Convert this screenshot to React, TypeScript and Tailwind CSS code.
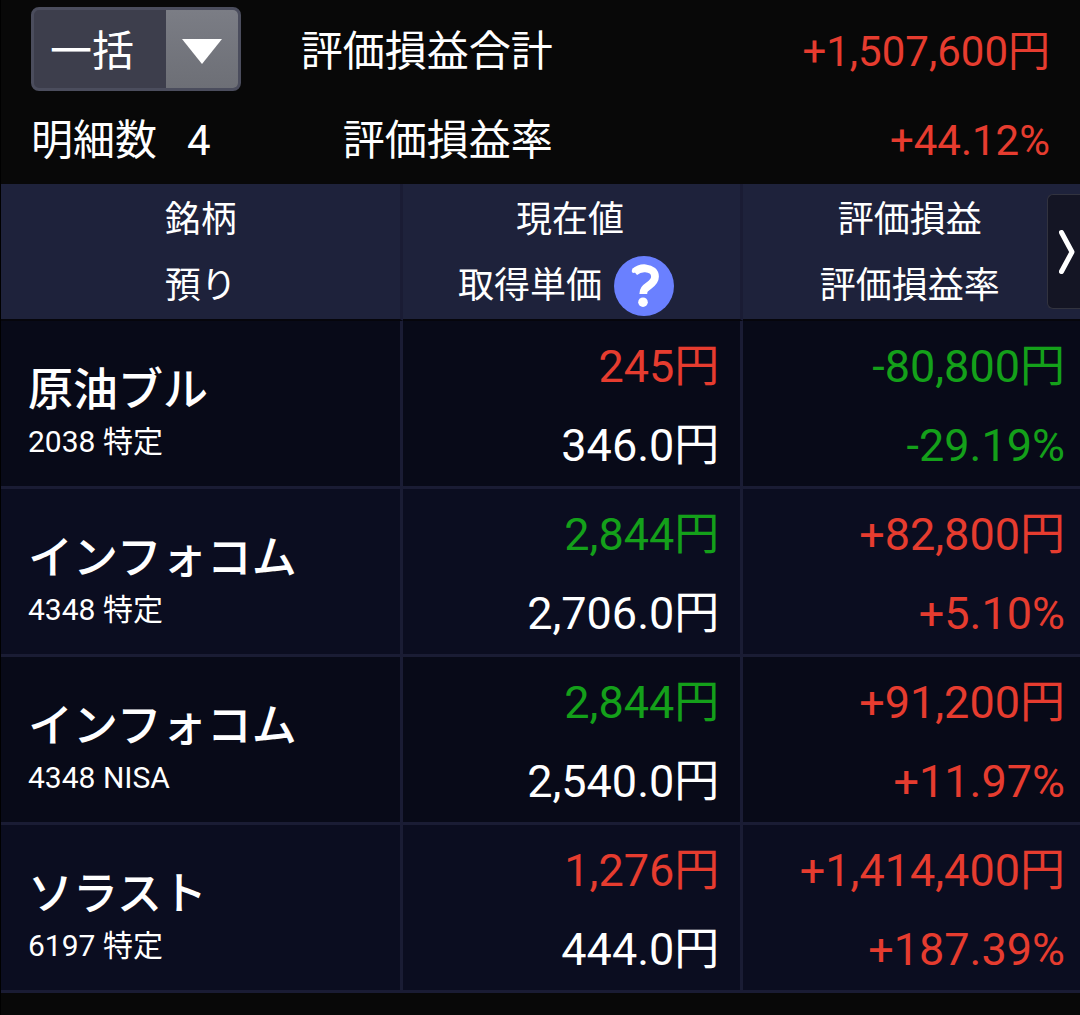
import { useState } from "react";
import clsx from "clsx";

type Holding = {
  name: string;
  code: string;
  account: string;
  price: string;
  priceUp: boolean;
  cost: string;
  profit: string;
  rate: string;
  gain: boolean;
};

const holdings: Holding[] = [
  {
    name: "原油ブル",
    code: "2038",
    account: "特定",
    price: "245円",
    priceUp: true,
    cost: "346.0円",
    profit: "-80,800円",
    rate: "-29.19%",
    gain: false,
  },
  {
    name: "インフォコム",
    code: "4348",
    account: "特定",
    price: "2,844円",
    priceUp: false,
    cost: "2,706.0円",
    profit: "+82,800円",
    rate: "+5.10%",
    gain: true,
  },
  {
    name: "インフォコム",
    code: "4348",
    account: "NISA",
    price: "2,844円",
    priceUp: false,
    cost: "2,540.0円",
    profit: "+91,200円",
    rate: "+11.97%",
    gain: true,
  },
  {
    name: "ソラスト",
    code: "6197",
    account: "特定",
    price: "1,276円",
    priceUp: true,
    cost: "444.0円",
    profit: "+1,414,400円",
    rate: "+187.39%",
    gain: true,
  },
];

function ModeSelect() {
  const [mode, setMode] = useState("一括");

  return (
    <div className="relative h-[84px] w-[210px] overflow-hidden rounded-lg border-3 border-[#4b4d5d] bg-[#3d3e4c]">
      <select
        aria-label="表示方法"
        value={mode}
        onChange={(e) => setMode(e.target.value)}
        className="h-full w-full appearance-none bg-transparent pt-1 pl-4 text-[42px] text-white outline-none"
      >
        <option className="bg-[#3d3e4c]">一括</option>
        <option className="bg-[#3d3e4c]">個別</option>
      </select>
      {/* arrow sits over the select, clicks go through */}
      <span className="pointer-events-none absolute inset-y-0 right-0 flex w-[72px] items-center justify-center bg-linear-to-b from-[#7b7d85] to-[#6d6f76] pt-1">
        <svg width="40" height="26" viewBox="0 0 40 26" fill="#fff">
          <path d="M0 1h40L20 26z" />
        </svg>
      </span>
    </div>
  );
}

function Summary() {
  return (
    <header className="px-[30px] pt-[7px] text-[42px]">
      <div className="flex h-[84px]">
        <div className="flex w-[51.2%] items-center justify-between">
          <ModeSelect />
          <span className="pt-1">評価損益合計</span>
        </div>
        <span className="flex-1 self-center pt-1 text-right text-[#e63c2f]">
          +1,507,600円
        </span>
      </div>
      <div className="flex h-[93px] items-center pt-[6px]">
        <div className="flex w-[51.2%] items-center justify-between">
          <span className="flex gap-[30px]">
            <span>明細数</span>
            <span>4</span>
          </span>
          <span>評価損益率</span>
        </div>
        <span className="flex-1 text-right text-[#e63c2f]">+44.12%</span>
      </div>
    </header>
  );
}

function HelpButton() {
  return (
    <button type="button" aria-label="ヘルプ" className="mr-3 ml-3 shrink-0 cursor-pointer">
      <svg width="60" height="60" viewBox="0 0 60 60" fill="none">
        <circle cx="30" cy="30" r="30" fill="#6a80ff" />
        <path
          d="M20.5 16C24 13 28 12 31.5 12.3C37.5 12.8 41 16 41 20.5C41 24.5 38.5 27 35 29.5C31 32.3 29.3 34 29.3 38"
          stroke="#fff"
          strokeWidth="7.8"
        />
        <circle cx="19.7" cy="15" r="2" fill="#fff" />
        <circle cx="29" cy="46.2" r="4.8" fill="#fff" />
      </svg>
    </button>
  );
}

function HoldingRow({ item }: { item: Holding }) {
  return (
    <tr className="h-[168px] odd:bg-[#080a18] even:bg-[#0b0d20]">
      <td className="border-r-3 pt-4 pl-[27px]">
        <div className="text-[45px] leading-[60px] font-medium">{item.name}</div>
        <div className="text-[30px] leading-[42px]">
          {item.code} {item.account}
        </div>
      </td>
      <td className="border-r-3 pt-[5px] pr-[21px] text-right text-[45px] leading-[79px]">
        <div className={clsx(item.priceUp ? "text-[#e63c2f]" : "text-[#14a01a]")}>
          {item.price}
        </div>
        <div>{item.cost}</div>
      </td>
      <td
        className={clsx(
          "pt-[5px] pr-[15px] text-right text-[45px] leading-[79px]",
          item.gain ? "text-[#e63c2f]" : "text-[#14a01a]"
        )}
      >
        <div>{item.profit}</div>
        <div>{item.rate}</div>
      </td>
    </tr>
  );
}

export default function App() {
  return (
    <div
      lang="ja"
      className="min-h-screen border-l border-black bg-[#080808] font-['Roboto','Noto_Sans_CJK_JP',sans-serif] text-white"
    >
      <Summary />
      <main className="relative">
        <table className="w-full table-fixed border-separate border-spacing-0 [&_td]:border-b-3 [&_td]:border-[#1a1c34]">
          <colgroup>
            <col className="w-[37.3%]" />
            <col className="w-[31.5%]" />
            <col />
          </colgroup>
          <thead>
            <tr className="h-[137px] bg-[#1e223b] text-[36px] leading-[66px] [&>th]:border-b-2 [&>th]:border-b-[#06060c] [&>th]:p-0 [&>th]:pt-[3px] [&>th]:font-normal">
              <th scope="col" className="border-r-3 border-r-[#1a1c34]">
                <div>銘柄</div>
                <div>預り</div>
              </th>
              <th scope="col" className="border-r-3 border-r-[#1a1c34]">
                <div className="pr-1">現在値</div>
                <div className="flex h-[66px] items-center justify-center">
                  取得単価
                  <HelpButton />
                </div>
              </th>
              <th scope="col">
                <div className="pr-1">評価損益</div>
                <div className="pr-1">評価損益率</div>
              </th>
            </tr>
          </thead>
          <tbody>
            {holdings.map((item, index) => (
              <HoldingRow key={index} item={item} />
            ))}
          </tbody>
        </table>
        <button
          type="button"
          aria-label="次の項目"
          className="absolute top-[10px] right-0 flex h-[115px] w-[33px] cursor-pointer items-center justify-end rounded-l-md border border-r-0 border-[#32333f] bg-[#141524] pr-[5px]"
        >
          <svg width="16" height="44" viewBox="0 0 16 44" fill="none">
            <path
              d="M2.5 2.5L13 22L2.5 41.5"
              stroke="#fff"
              strokeWidth="5"
              strokeLinecap="round"
              strokeLinejoin="round"
            />
          </svg>
        </button>
      </main>
    </div>
  );
}
